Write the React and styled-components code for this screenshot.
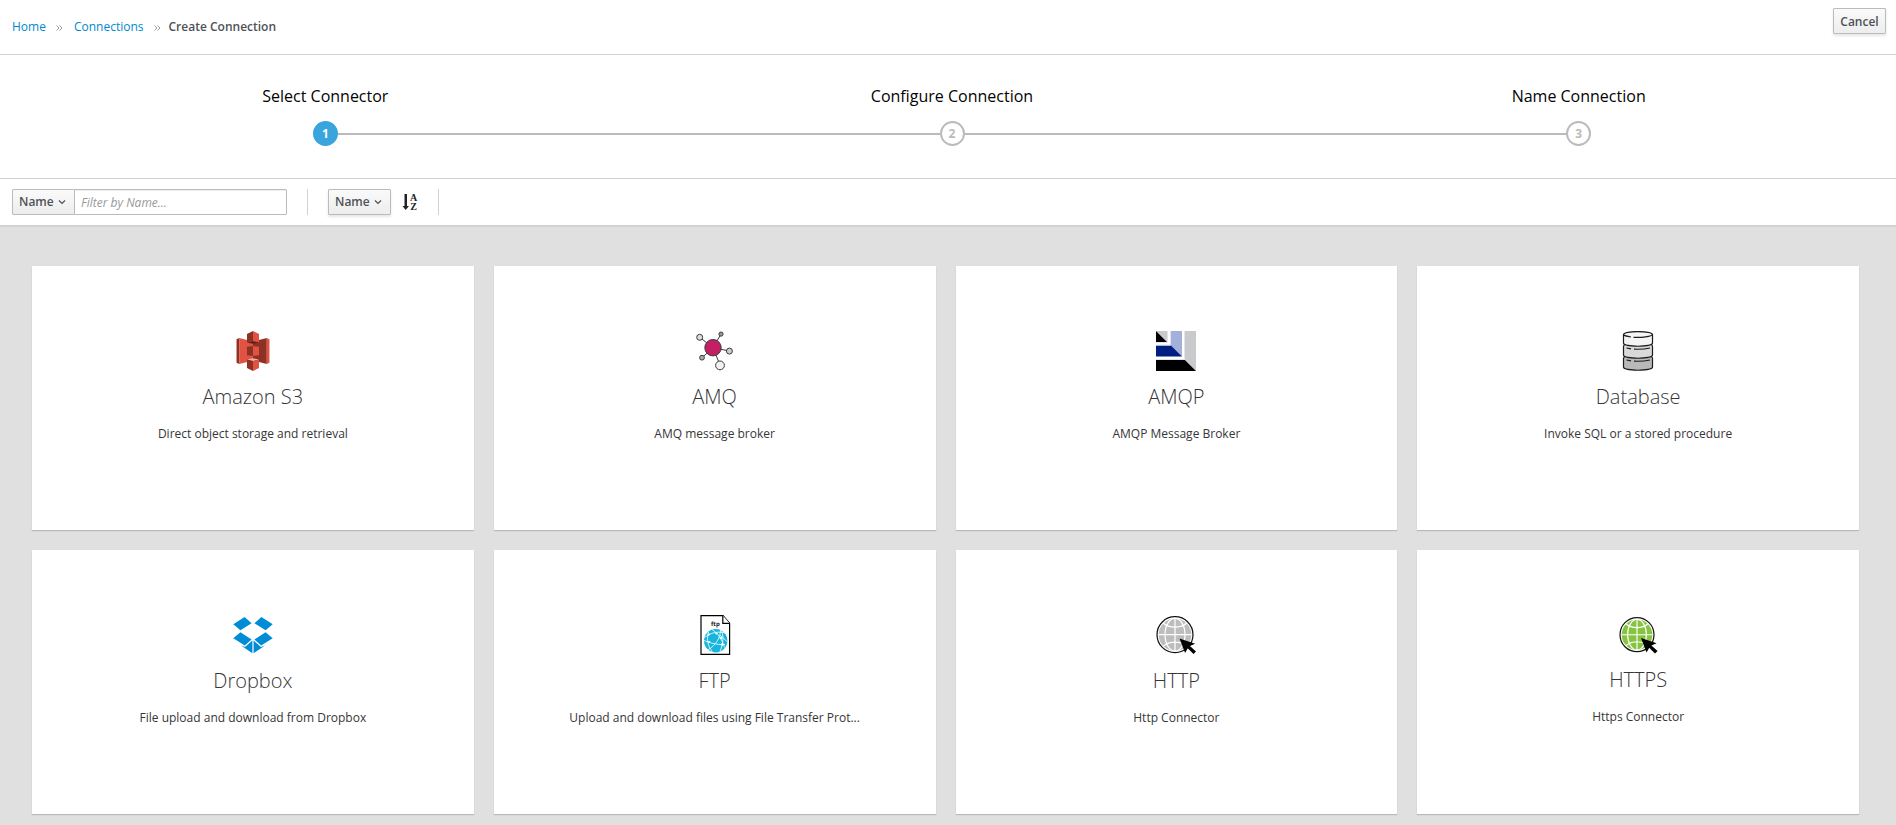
import React from "react";
import styled, { createGlobalStyle } from "styled-components";

const GlobalStyle = createGlobalStyle`
  *, *::before, *::after { box-sizing: border-box; }
  body {
    margin: 0;
    background: #e0e0e0;
    color: #363636;
    font-family: "Open Sans", "Noto Sans", sans-serif;
    font-size: 12px;
    line-height: 20px;
  }
`;

const Header = styled.header`
  display: flex;
  justify-content: space-between;
  align-items: flex-start;
  padding: 8px 10px 9px 12px;
  background: #fff;
  border-bottom: 1px solid #d1d1d1;
`;

const Breadcrumb = styled.ol`
  display: flex;
  align-items: center;
  margin: 0;
  padding: 9px 0 8px;
  list-style: none;
`;

const Crumb = styled.li`
  display: flex;
  align-items: center;
  color: #4d5258;
  font-weight: ${(p) => (p.$current ? 600 : 400)};
`;

const CrumbLink = styled.a`
  margin-left: ${(p) => (p.$first ? "0" : "3px")};
  color: #0088ce;
  text-decoration: none;
  &:hover { text-decoration: underline; }
`;

const CrumbArrow = styled.svg`
  width: 7px;
  height: 6px;
  margin: 1px 8px 0 10px;
  fill: none;
  stroke: #9c9c9c;
`;

const Button = styled.button`
  min-width: 53px;
  height: 26px;
  padding: 3px 6px 1px;
  border: 1px solid #bbb;
  border-radius: 1px;
  background: linear-gradient(#fafafa, #ededed);
  box-shadow: 0 2px 3px rgba(3, 3, 3, 0.1);
  color: #4d5258;
  font: 600 12px/20px "Open Sans", "Noto Sans", sans-serif;
  cursor: pointer;
`;

const Steps = styled.ol`
  display: grid;
  grid-template-columns: repeat(3, 1fr);
  margin: 0;
  padding: 29px 4px 32px 12px;
  list-style: none;
  background: #fff;
  border-bottom: 1px solid #d1d1d1;
`;

const Step = styled.li`
  display: flex;
  flex-direction: column;
  gap: 13px;
`;

const StepLabel = styled.span`
  color: #030303;
  font-size: 16px;
  line-height: 24px;
  text-align: center;
`;

const StepTrack = styled.div`
  display: flex;
  align-items: center;
`;

const StepLine = styled.span`
  flex: 1;
  height: 2px;
  margin-top: 1px;
  background: ${(p) => (p.$hidden ? "transparent" : "#bbb")};
`;

const StepNumber = styled.span`
  width: 25px;
  height: 25px;
  border: 2px solid ${(p) => (p.$active ? "#39a5dc" : "#bbb")};
  border-radius: 50%;
  background: ${(p) => (p.$active ? "#39a5dc" : "#fff")};
  color: ${(p) => (p.$active ? "#fff" : "#bbb")};
  font-weight: 700;
  line-height: 21px;
  text-align: center;
`;

const Toolbar = styled.form`
  display: flex;
  align-items: center;
  padding: 10px 12px;
  background: #fff;
  border-bottom: 1px solid #d1d1d1;
  box-shadow: 0 1px 0 rgba(0, 0, 0, 0.05);
`;

const ToolGroup = styled.div`
  display: flex;
  align-items: center;
  height: 26px;
  padding-right: 20px;
  margin-right: 20px;
  border-right: 1px solid #d1d1d1;
`;

const SelectBox = styled.span`
  display: grid;
  align-items: center;
`;

const Select = styled.select`
  grid-area: 1 / 1;
  width: 63px;
  height: 26px;
  padding: 2px 6px;
  appearance: none;
  border: 1px solid #bbb;
  border-radius: 1px;
  background: linear-gradient(#fafafa, #ededed);
  box-shadow: ${(p) => (p.$joined ? "none" : "0 2px 3px rgba(3, 3, 3, 0.1)")};
  color: #4d5258;
  font: 600 12px/20px "Open Sans", "Noto Sans", sans-serif;
`;

const Chevron = styled.svg`
  grid-area: 1 / 1;
  justify-self: end;
  width: 8px;
  height: 6px;
  margin-right: 9px;
  fill: none;
  stroke: #4d5258;
  stroke-width: 1.2;
  pointer-events: none;
`;

const FilterInput = styled.input`
  width: 213px;
  height: 26px;
  margin-left: -1px;
  padding: 2px 6px;
  border: 1px solid #bbb;
  border-radius: 1px;
  box-shadow: inset 0 1px 1px rgba(3, 3, 3, 0.075);
  color: #363636;
  font: 400 12px/20px "Open Sans", "Noto Sans", sans-serif;
  &::placeholder { color: #999; font-style: italic; opacity: 1; }
`;

const SortButton = styled.button`
  display: flex;
  margin-left: 11px;
  padding: 0;
  border: 0;
  background: none;
  cursor: pointer;
`;

const Grid = styled.main`
  display: grid;
  grid-template-columns: repeat(4, 1fr);
  gap: 20px;
  padding: 40px 37px 11px 32px;
`;

const Card = styled.article`
  display: flex;
  flex-direction: column;
  align-items: center;
  min-width: 0;
  padding: 65px 20px 86px;
  background: #fff;
  box-shadow: 0 1px 1px rgba(3, 3, 3, 0.175);
  text-align: center;
`;

const CardTitle = styled.h2`
  margin: 15px 0 16px;
  font-size: 20px;
  font-weight: 300;
  line-height: 22px;
`;

const CardText = styled.p`
  margin: 0;
`;

const S3Icon = () => (
  <svg width="40" height="40" viewBox="-27 0 310 311" aria-hidden="true">
    <path fill="#8C3123" d="M20.6 53.7 0 64v183l20.6 10.3z" />
    <path fill="#E05243" d="M131 229 20.6 257.3V53.7L131 81.5z" />
    <path fill="#8C3123" d="m128 229.3 107.4 28V53.7L128 81.7z" />
    <path fill="#8C3123" d="m81.2 187.9 46.8 6V117l-46.8 5.9z" />
    <path fill="#E05243" d="m174.8 187.9-46.8 6V117l46.8 5.9zM235.4 53.7 256 64v183l-20.6 10.3z" />
    <path fill="#5E1F18" d="M174.8 89.6 128 98.2l-46.8-8.6L128 77.4z" />
    <path fill="#F2B0A9" d="m174.8 221.1-46.8-8.6-46.8 8.6 46.8 13z" />
    <path fill="#8C3123" d="M81.2 89.6 128 78V0L81.2 23.4zM128 310.7l-46.8-23.4v-66.2l46.8 11.6z" />
    <path fill="#E05243" d="M174.8 89.6 128 78V0l46.8 23.4zM128 310.7l46.8-23.4v-66.2L128 232.7z" />
  </svg>
);

const AmqIcon = () => (
  <svg width="40" height="40" viewBox="0 0 40 40" stroke="#3c3c3c" aria-hidden="true">
    <path d="M4.7 6.3 18 16.7 26 3M34.4 20 18 16.7 25 34M18 16.7 7 26.7" fill="none" />
    <circle cx="18" cy="16.7" r="8.2" fill="#c41e64" />
    <circle cx="4.7" cy="6.3" r="3" fill="#ddd" />
    <circle cx="26" cy="3.1" r="2.1" fill="#999" />
    <circle cx="34.4" cy="20.1" r="3" fill="#ccc" />
    <circle cx="7" cy="26.7" r="2.4" fill="#aaa" />
    <circle cx="25" cy="34.4" r="4.4" fill="#f2f2f2" />
  </svg>
);

const AmqpIcon = () => (
  <svg width="40" height="40" viewBox="0 0 40 40" aria-hidden="true">
    <path fill="#c9cacc" d="M0 0h11v11zM29 0h11v40L29 28.5z" />
    <path fill="#000" d="M0 0v11h11zM0 29h29l11 11H0z" />
    <path fill="#a3b0dc" d="M15 0h11v25.5L15 14.5z" />
    <path fill="#001f82" d="M0 14.5h15l11 11H0z" />
    <path fill="none" stroke="#e3e4ea" d="M0 11.5h11.5V0M0 14h14.5V0M0 28.5h28.5V0" />
  </svg>
);

const DatabaseIcon = () => (
  <svg width="40" height="40" viewBox="0 0 40 40" stroke="#1c1c1c" strokeWidth="1.2" aria-hidden="true">
    <path fill="#b9b9b9" d="M7 25.500Q5.500 26 5.500 27.500V36C5.500 40.300 34.500 40.300 34.500 36V27.500Q34.500 26 33 25.500z" />
    <path fill="#d9d9d9" d="M7 13.500Q5.500 14 5.500 15.500V24C5.500 28.300 34.500 28.300 34.500 24V15.500Q34.500 14 33 13.500z" />
    <path fill="#f4f4f4" d="M5.500 3.500V12C5.500 16.300 34.500 16.300 34.500 12V3.500C34.500-.4 5.500-.4 5.500 3.500z" />
    <path fill="none" d="M5.500 3.500q.5 1.500 7.500 2.500M15.500 6.300c8 .4 18-.6 19-2.800M8.500 17l4.500.8M16 18.200c6 .2 11 0 16-1.200M8.500 29l4.500.8M16 30.200c6 .2 11 0 16-1.200" />
  </svg>
);

const DropboxIcon = () => (
  <svg width="40" height="40" viewBox="0 0 40 40" fill="#008cd6" aria-hidden="true">
    <path d="M.3 9.200 11.600 2l7 6.200L7.400 15.300zM39.700 9.200 28.400 2l-7 6.200 11.200 7.100zM.3 23.200l7.100-6 11.200 7.300-6.800 6.100zM39.700 23.200l-7.100-6-11.200 7.300 6.800 6.100z" />
    <path d="M8 30.500l4 1.400 7.400-6.300v12.600zM32 30.500l-4 1.400-7.400-6.300v12.600z" />
  </svg>
);

const FtpIcon = () => (
  <svg width="40" height="40" viewBox="0 0 40 40" aria-hidden="true">
    <path d="M6 .6h22l6.600 7.700v31.100H6z" fill="#fff" stroke="#000" strokeWidth="1.200" />
    <path d="M27.800.6v7.700h6.800" fill="#fff" stroke="#000" strokeWidth="1.200" />
    <text x="20.400" y="11" fontSize="6" fontWeight="700" textAnchor="middle" textRendering="geometricPrecision" fill="#222">ftp</text>
    <circle cx="20.700" cy="25.700" r="11.700" fill="#16b5de" />
    <g fill="none" stroke="#fff" strokeWidth=".8">
      <path d="M9.500 22.500c6-5 14-6.500 20.500-4.500M13.500 17c-2 7-1 14 4 20M17 14.500c5 3 10 9 12.500 18M25.500 14.500c0 8-4 15-12.500 20.500M9 25.500c5 2 12 4.500 21 4M26 15c2.500 4 3 12-1 21.500M25 20l7 6.500" />
    </g>
    <g fill="#fff">
      <circle cx="13.800" cy="19.500" r="1.100" /><circle cx="21.500" cy="18.500" r="1.100" /><circle cx="25.800" cy="23" r="1.200" />
      <circle cx="14.200" cy="27" r="1.100" /><circle cx="27" cy="29.500" r="1.200" />
    </g>
  </svg>
);

const GlobeIcon = ({ color, radius, height, tip }) => (
  <svg width="40" height={height} viewBox={`0 0 40 ${height}`} aria-hidden="true">
    <circle cx="19" cy="19.700" r={radius} fill="#fff" stroke="#111" strokeWidth="1.200" />
    <circle cx="19" cy="19.700" r={radius - 1.700} fill={color} />
    <g transform={`translate(19 19.700) scale(${(radius - 1.700) / 16})`} fill="none" stroke="#fff" strokeWidth="1.200">
      <path d="M0-16V16M-16 0H16M-11.500-11.500c6 5.500 17 5.500 23 0M-11.500 11.500c6-5.500 17-5.500 23 0" />
      <ellipse rx="9.800" ry="16" />
    </g>
    <path d="m0 0 15.600 5.200-5.200 2.400 6.200 5.400-2.600 2.600-5.800-5.800-2.600 4.800z" transform={`translate(${tip} ${tip})`} fill="#000" />
  </svg>
);

const connectors = [
  { name: "Amazon S3", text: "Direct object storage and retrieval", icon: <S3Icon /> },
  { name: "AMQ", text: "AMQ message broker", icon: <AmqIcon /> },
  { name: "AMQP", text: "AMQP Message Broker", icon: <AmqpIcon /> },
  { name: "Database", text: "Invoke SQL or a stored procedure", icon: <DatabaseIcon /> },
  { name: "Dropbox", text: "File upload and download from Dropbox", icon: <DropboxIcon /> },
  { name: "FTP", text: "Upload and download files using File Transfer Prot...", icon: <FtpIcon /> },
  { name: "HTTP", text: "Http Connector", icon: <GlobeIcon color="#bdbdbd" radius={18} height={40} tip={23.5} /> },
  { name: "HTTPS", text: "Https Connector", icon: <GlobeIcon color="#86c440" radius={17} height={39} tip={23} /> },
];

const steps = ["Select Connector", "Configure Connection", "Name Connection"];

const Arrow = () => (
  <CrumbArrow viewBox="0 0 7 6" aria-hidden="true">
    <path d="M.5.5 3 3 .5 5.500M3.500.5 6 3 3.500 5.500" />
  </CrumbArrow>
);

const FieldSelect = ({ label, joined }) => (
  <SelectBox>
    <Select aria-label={label} $joined={joined}>
      <option>Name</option>
    </Select>
    <Chevron viewBox="0 0 8 6" aria-hidden="true">
      <path d="M1 1.500 4 4.500 7 1.500" />
    </Chevron>
  </SelectBox>
);

export default function App() {
  return (
    <>
      <GlobalStyle />
      <Header>
        <nav aria-label="Breadcrumb">
          <Breadcrumb>
            <Crumb><CrumbLink $first href="#home">Home</CrumbLink></Crumb>
            <Crumb><Arrow /><CrumbLink href="#connections">Connections</CrumbLink></Crumb>
            <Crumb $current aria-current="page"><Arrow />Create Connection</Crumb>
          </Breadcrumb>
        </nav>
        <Button type="button">Cancel</Button>
      </Header>

      <Steps>
        {steps.map((label, i) => (
          <Step key={label}>
            <StepLabel>{label}</StepLabel>
            <StepTrack>
              <StepLine $hidden={i === 0} />
              <StepNumber $active={i === 0}>{i + 1}</StepNumber>
              <StepLine $hidden={i === steps.length - 1} />
            </StepTrack>
          </Step>
        ))}
      </Steps>

      <Toolbar onSubmit={(e) => e.preventDefault()}>
        <ToolGroup>
          <FieldSelect label="Filter field" joined />
          <FilterInput type="text" aria-label="Filter by Name" placeholder="Filter by Name..." />
        </ToolGroup>
        <ToolGroup>
          <FieldSelect label="Sort field" />
          <SortButton type="button" aria-label="Sort ascending">
            <svg width="16" height="18" viewBox="0 0 16 18" fill="#222" aria-hidden="true">
              <path d="M2.500 1h2.500v12h2L3.700 17 .5 13h2z" />
              <g fontFamily="Liberation Serif, serif" fontSize="10" fontWeight="700" textAnchor="middle">
                <text x="11.500" y="8">A</text>
                <text x="11.500" y="17">Z</text>
              </g>
            </svg>
          </SortButton>
        </ToolGroup>
      </Toolbar>

      <Grid>
        {connectors.map((c) => (
          <Card key={c.name}>
            {c.icon}
            <CardTitle>{c.name}</CardTitle>
            <CardText>{c.text}</CardText>
          </Card>
        ))}
      </Grid>
    </>
  );
}
